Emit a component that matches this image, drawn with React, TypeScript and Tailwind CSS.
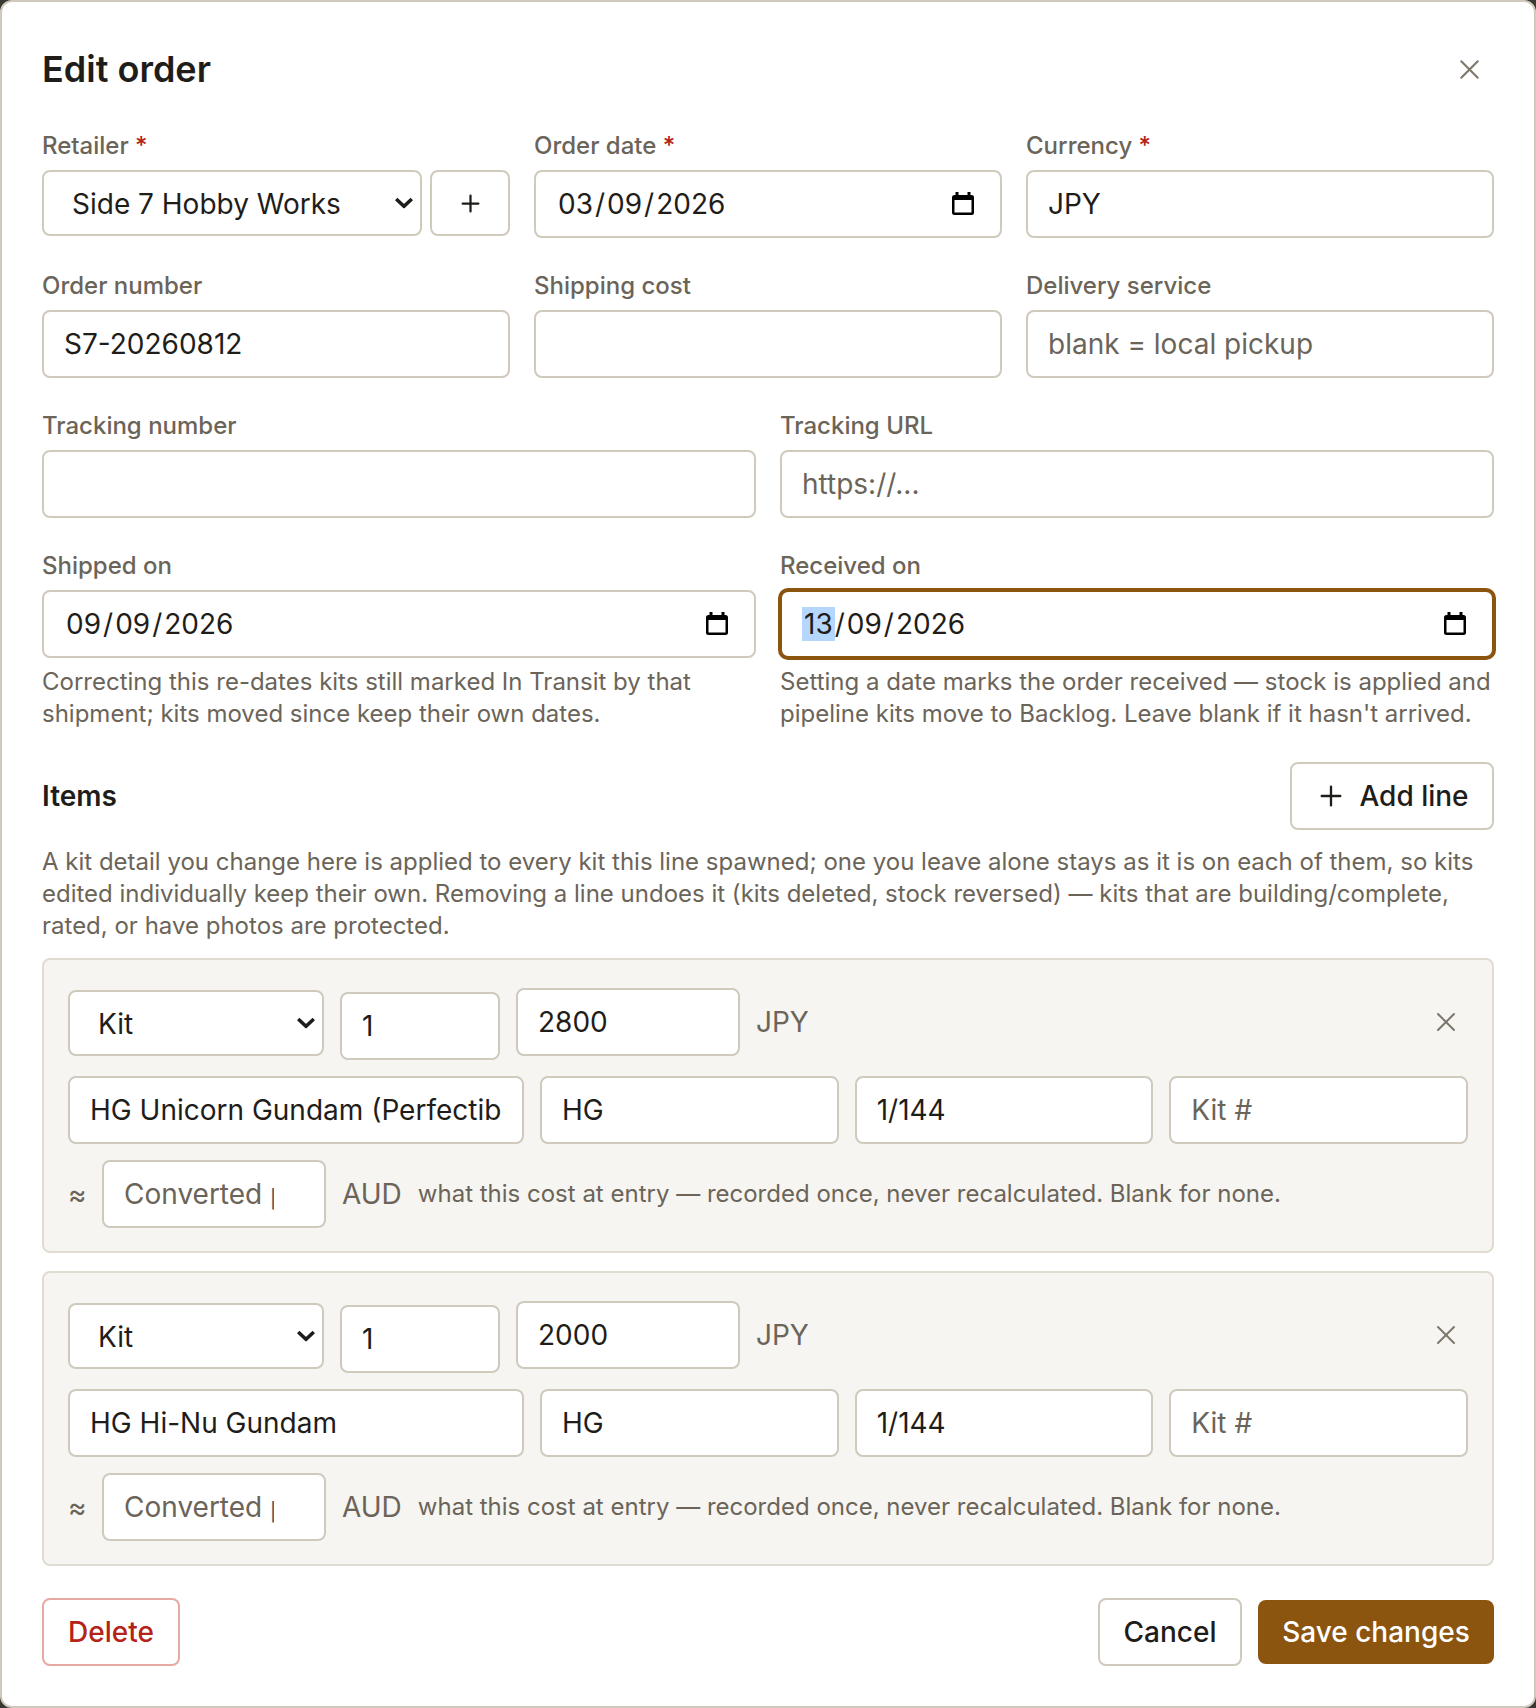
import React from 'react';
import { Plus, X } from 'lucide-react';

const inputCls =
  'h-[68px] w-full rounded-[8px] border-2 border-[#d0cabd] bg-white px-[20px] text-[28px] text-[#1f1d1a] outline-none placeholder:text-[#6b6459]';
const labelCls = 'mb-[8px] block text-[24px] leading-[32px] font-medium text-[#6b6459]';
const helpCls = 'mt-[8px] text-[24px] leading-[32px] text-[#6b6459]';

function Chevron() {
  return (
    <svg
      viewBox="0 0 18 11"
      className="pointer-events-none absolute top-1/2 right-[9px] h-[11px] w-[18px] -translate-y-1/2 text-[#1f1d1a]"
      fill="none"
      stroke="currentColor"
      strokeWidth="3.5"
    >
      <path d="M1.2 1.5L9 8.8l7.8-7.3" />
    </svg>
  );
}

function CalendarIcon() {
  return (
    <svg viewBox="0 0 22 23" className="-mt-[2px] h-[23px] w-[22px] shrink-0" fill="#000" fillRule="evenodd">
      <path d="M3.5 0h3v3h9V0h3v3h1A2.5 2.5 0 0 1 22 5.5v15a2.5 2.5 0 0 1-2.5 2.5h-17A2.5 2.5 0 0 1 0 20.5v-15A2.5 2.5 0 0 1 2.5 3h1zM2.5 8v12.5h17V8z" />
    </svg>
  );
}

function Label({ text, required }: { text: string; required?: boolean }) {
  return (
    <label className={labelCls}>
      {text}
      {required && <span className="text-[#b42318]"> *</span>}
    </label>
  );
}

function DateField({ value, focused }: { value: string; focused?: boolean }) {
  const [day, month, year] = value.split('/');
  return (
    <div
      className={
        focused
          ? 'flex h-[68px] items-center justify-between rounded-[8px] border-2 border-[#8b5510] bg-white pr-[26px] pl-[20px] text-[28px] text-[#1f1d1a] ring-2 ring-[#8b5510]'
          : 'flex h-[68px] items-center justify-between rounded-[8px] border-2 border-[#d0cabd] bg-white pr-[26px] pl-[20px] text-[28px] text-[#1f1d1a]'
      }
    >
      <span>
        <span className={focused ? 'inline-block bg-[#b5d7fe] px-[2px] leading-[34px]' : 'inline-block px-[2px]'}>{day}</span>/
        <span className="inline-block px-[2px]">{month}</span>/
        <span className="inline-block px-[2px]">{year}</span>
      </span>
      <CalendarIcon />
    </div>
  );
}

function ItemCard({ price, name }: { price: string; name: string }) {
  return (
    <div className="flex flex-col rounded-[8px] border-2 border-[#e0dcd2] bg-[#f6f5f1] px-[24px] pt-[28px] pb-[23px]">
      <div className="flex items-start gap-[16px]">
        <div className="relative mt-[2px] w-[256px]">
          <select className="h-[66px] w-full appearance-none rounded-[8px] border-2 border-[#d0cabd] bg-white pt-[2px] pl-[28px] text-[28px] text-[#1f1d1a] outline-none">
            <option>Kit</option>
          </select>
          <Chevron />
        </div>
        <input className={`${inputCls} mt-[4px] !w-[160px]`} defaultValue="1" />
        <input className={`${inputCls} !w-[224px]`} defaultValue={price} />
        <span className="mt-[14px] text-[28px] leading-[40px] text-[#6b6459]">JPY</span>
        <button className="mt-[14px] mr-[6px] ml-auto flex h-[40px] w-[32px] items-center justify-center text-[#7d776b]">
          <X size={32} strokeWidth={1.5} />
        </button>
      </div>
      <div className="mt-[16px] grid grid-cols-[456px_1fr_1fr_1fr] gap-[16px]">
        <input className={inputCls} defaultValue={name} />
        <input className={inputCls} defaultValue="HG" />
        <input className={inputCls} defaultValue="1/144" />
        <input className={inputCls} placeholder="Kit #" />
      </div>
      <div className="mt-[16px] flex items-center">
        <span className="w-[34px] text-[28px] text-[#6b6459]">≈</span>
        <input className={`${inputCls} !w-[224px] !pr-[50px]`} placeholder="Converted price" />
        <span className="ml-[16px] text-[28px] text-[#6b6459]">AUD</span>
        <span className="ml-[16px] text-[24px] text-[#6b6459]">
          what this cost at entry — recorded once, never recalculated. Blank for none.
        </span>
      </div>
    </div>
  );
}

export default function App() {
  return (
    <div className="min-h-[1708px] bg-[#3a3833] font-['Inter',sans-serif]">
      <div className="h-[1708px] rounded-[12px] border-2 border-[#d0cabd] bg-white px-[40px] pt-[40px]">
        <div className="flex items-center justify-between">
          <h1 className="text-[36px] leading-[54px] font-semibold text-[#1f1d1a]">Edit order</h1>
          <button className="mr-[8px] text-[#7d776b]">
            <X size={33} strokeWidth={1.5} />
          </button>
        </div>

        <div className="mt-[34px] grid grid-cols-3 gap-x-[24px] gap-y-[32px]">
          <div>
            <Label text="Retailer" required />
            <div className="flex items-start gap-[8px]">
              <div className="relative flex-1">
                <select className="h-[66px] w-full appearance-none rounded-[8px] border-2 border-[#d0cabd] bg-white pt-[2px] pl-[28px] text-[28px] text-[#1f1d1a] outline-none">
                  <option>Side 7 Hobby Works</option>
                </select>
                <Chevron />
              </div>
              <button className="flex h-[66px] w-[80px] items-center justify-center rounded-[8px] border-2 border-[#d0cabd] bg-white text-[#1f1d1a]">
                <Plus size={27} strokeWidth={2} />
              </button>
            </div>
          </div>
          <div>
            <Label text="Order date" required />
            <DateField value="03/09/2026" />
          </div>
          <div>
            <Label text="Currency" required />
            <input className={inputCls} defaultValue="JPY" />
          </div>
          <div>
            <Label text="Order number" />
            <input className={inputCls} defaultValue="S7-20260812" />
          </div>
          <div>
            <Label text="Shipping cost" />
            <input className={inputCls} />
          </div>
          <div>
            <Label text="Delivery service" />
            <input className={inputCls} placeholder="blank = local pickup" />
          </div>
        </div>

        <div className="mt-[32px] grid grid-cols-2 gap-x-[24px] gap-y-[32px]">
          <div>
            <Label text="Tracking number" />
            <input className={inputCls} />
          </div>
          <div>
            <Label text="Tracking URL" />
            <input className={inputCls} placeholder="https://..." />
          </div>
          <div>
            <Label text="Shipped on" />
            <DateField value="09/09/2026" />
            <p className={helpCls}>
              Correcting this re-dates kits still marked In Transit by that shipment; kits moved since keep their own dates.
            </p>
          </div>
          <div>
            <Label text="Received on" />
            <DateField value="13/09/2026" focused />
            <p className={helpCls}>
              Setting a date marks the order received — stock is applied and pipeline kits move to Backlog. Leave blank if it hasn't arrived.
            </p>
          </div>
        </div>

        <div className="mt-[32px] flex items-center justify-between">
          <h2 className="text-[28px] font-semibold text-[#1f1d1a]">Items</h2>
          <button className="flex h-[68px] w-[204px] items-center justify-center gap-[12px] rounded-[8px] border-2 border-[#d0cabd] bg-white text-[28px] font-medium text-[#1f1d1a]">
            <Plus size={32} strokeWidth={1.75} />
            Add line
          </button>
        </div>
        <p className="mt-[16px] text-[24px] leading-[32px] text-[#6b6459]">
          A kit detail you change here is applied to every kit this line spawned; one you leave alone stays as it is on each of them, so kits edited individually keep their own. Removing a line undoes it (kits deleted, stock reversed) — kits that are building/complete, rated, or have photos are protected.
        </p>

        <div className="mt-[16px] flex flex-col gap-[17.5px]">
          <ItemCard price="2800" name="HG Unicorn Gundam (Perfectible)" />
          <ItemCard price="2000" name="HG Hi-Nu Gundam" />
        </div>

        <div className="mt-[32.5px] flex items-center justify-between">
          <button className="h-[68px] w-[138px] rounded-[8px] border-2 border-[#e6a9a3] bg-white text-[28px] font-medium text-[#b42318]">
            Delete
          </button>
          <div className="flex items-center gap-[16px]">
            <button className="h-[68px] w-[144px] rounded-[8px] border-2 border-[#d0cabd] bg-white text-[28px] font-medium text-[#1f1d1a]">
              Cancel
            </button>
            <button className="h-[64px] w-[236px] rounded-[8px] bg-[#8b5510] text-[28px] font-medium text-white">
              Save changes
            </button>
          </div>
        </div>
      </div>
    </div>
  );
}
